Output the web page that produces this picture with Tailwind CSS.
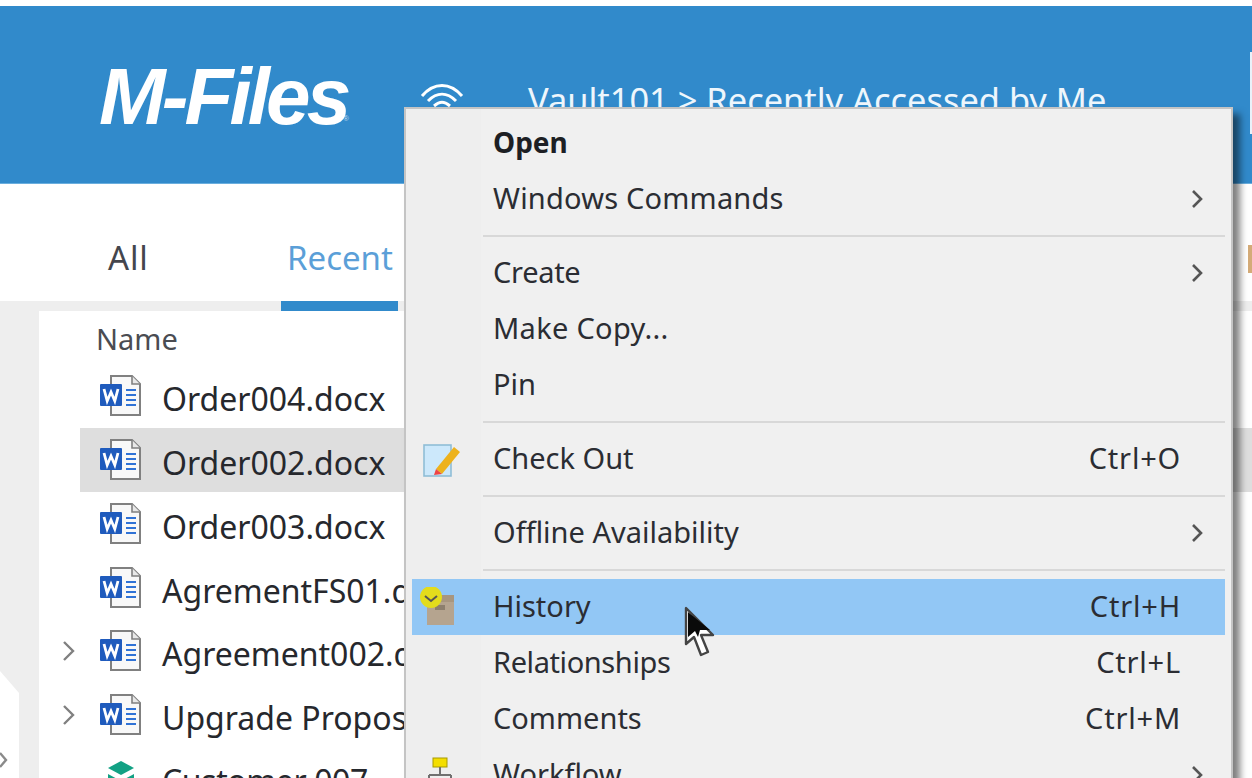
<!DOCTYPE html>
<html lang="en">
<head>
    <meta charset="UTF-8">
    <title>M-Files</title>
    <script src="https://cdn.jsdelivr.net/npm/@tailwindcss/browser@4"></script>
</head>
<body class="bg-white overflow-hidden font-['Noto_Sans','Open_Sans',sans-serif]">
<svg width="0" height="0" class="absolute">
    <defs>
        <symbol id="word" viewBox="0 0 42 42">
            <path d="M11 1h21l8 8v31H11z" fill="#f8f8f8" stroke="#808080" stroke-width="2"/>
            <path d="M32 1v8h8" fill="#e8e8e8" stroke="#808080" stroke-width="1.6"/>
            <path d="M26 15h10M26 20h10M26 25h10M26 30h10" stroke="#2f72d6" stroke-width="2"/>
            <rect x="0" y="9" width="22" height="22" rx="1" fill="#1f5bbd"/>
            <path d="M4 14l3.2 12 3.8-9 3.8 9L18 14" fill="none" stroke="#fff" stroke-width="2.8"/>
        </symbol>
    </defs>
</svg>

<div class="h-[778px] flex flex-col relative overflow-hidden">
    <!-- Header -->
    <div class="h-[6px] bg-white shrink-0"></div>
    <header class="h-[178px] bg-[#318acb] border-b border-[#6aaede] flex items-start pl-[99px] shrink-0 text-white">
        <div class="relative mt-[47px] w-[321px] text-[80px] leading-[88px] font-['Liberation_Sans'] font-bold italic tracking-[-3.900px]">
            M-Files
            <span class="absolute left-[244px] top-[61px] text-[8px] leading-[10px] font-normal not-italic tracking-normal text-white/70">®</span>
        </div>
        <svg class="mt-[76px] w-[44px] h-[30px]" viewBox="0 0 44 30" fill="none" stroke="#fff" stroke-width="3">
            <path d="M2 14C14 0 30 0 42 14"/><path d="M8 19c9-9 19-9 28 0"/><path d="M14 24c6-5 10-5 16 0"/><path d="M20 29c1.500-1 2.500-1 4 0"/>
        </svg>
        <div class="mt-[74px] ml-[64px] text-[34.400px] leading-[40px] whitespace-nowrap text-[#eef6fc]">Vault101 &gt; Recently Accessed by Me</div>
    </header>

    <!-- Tabs -->
    <div class="h-[117px] flex shrink-0 relative z-10">
        <div class="ml-[108px] mt-[52px] text-[33px] leading-[44px] tracking-[0.8px] text-[#44464d]">All</div>
        <div class="absolute left-[281px] top-0 w-[117px] h-[127px] border-b-[10px] border-[#318acb] pt-[52px] pl-[6px] text-[33px] leading-[44px] text-[#5b9fd8]">Recent</div>
    </div>

    <!-- List -->
    <div class="flex-1 bg-[#eeeeee] flex relative">
        <div class="w-[39px] relative shrink-0">
            <div class="absolute left-0 top-[370px] w-[19px] h-[110px] bg-white [clip-path:polygon(0_0,100%_22px,100%_100%,0_100%)]"></div>
            <svg class="absolute left-0 top-[451px] w-[8px] h-[16px]" viewBox="0 0 8 16" fill="none" stroke="#8a8a8a" stroke-width="2.4"><path d="M0 1l6 7-6 7"/></svg>
        </div>
        <div class="flex-1 bg-white mt-[10px] text-[#26282d] text-[32px] whitespace-nowrap overflow-hidden">
            <div class="h-[53px] pl-[57px] pt-[10px] text-[29px] leading-[36px] text-[#4a4c52]">Name</div>
            <div class="h-[64px] flex items-center pl-[61px] gap-[20px]"><svg class="w-[42px] h-[42px] shrink-0"><use href="#word"/></svg><span class="pt-[6px]">Order004.docx</span></div>
            <div class="h-[64px] ml-[41px] pl-[20px] flex items-center gap-[20px] bg-[#dedede]"><svg class="w-[42px] h-[42px] shrink-0"><use href="#word"/></svg><span class="pt-[6px]">Order002.docx</span></div>
            <div class="h-[64px] flex items-center pl-[61px] gap-[20px]"><svg class="w-[42px] h-[42px] shrink-0"><use href="#word"/></svg><span class="pt-[6px]">Order003.docx</span></div>
            <div class="h-[63px] flex items-center pl-[61px] gap-[20px]"><svg class="w-[42px] h-[42px] shrink-0"><use href="#word"/></svg><span class="pt-[7px]">AgrementFS01.docx</span></div>
            <div class="h-[64px] flex items-center pl-[22px] gap-[20px]">
                <svg class="w-[16px] h-[22px] shrink-0 mr-[3px]" viewBox="0 0 16 22" fill="none" stroke="#808080" stroke-width="2.4"><path d="M3 2l9 9-9 9"/></svg>
                <svg class="w-[42px] h-[42px] shrink-0"><use href="#word"/></svg><span class="pt-[6px]">Agreement002.docx</span>
            </div>
            <div class="h-[63px] flex items-center pl-[22px] gap-[20px]">
                <svg class="w-[16px] h-[22px] shrink-0 mr-[3px]" viewBox="0 0 16 22" fill="none" stroke="#808080" stroke-width="2.4"><path d="M3 2l9 9-9 9"/></svg>
                <svg class="w-[42px] h-[42px] shrink-0"><use href="#word"/></svg><span class="pt-[7px]">Upgrade Proposal.docx</span>
            </div>
            <div class="h-[64px] flex items-center pl-[68px] gap-[27px]">
                <svg class="w-[28px] h-[36px] shrink-0" viewBox="0 0 28 36"><path d="M14 1l13 7-13 7L1 8z" fill="#12a184"/><path d="M1 14l13 7 13-7v6l-13 7-13-7z" fill="#12a184"/></svg>
                <span class="pt-[6px] tracking-[-0.4px]">Customer 007</span>
            </div>
        </div>
    </div>

    <!-- Context menu -->
    <div class="absolute z-20 left-[404px] top-[107px] w-[829px] h-[680px] bg-[#f0f0f0] border-2 border-[#c4c4c4] shadow-[7px_7px_7px_rgba(0,0,0,0.5)] text-[29px] text-[#2b2d33] px-[6px] pt-[6px] whitespace-nowrap">
        <div class="absolute left-0 top-0 w-[75px] h-full bg-[#eeeeee]"></div>
        <div class="relative">
            <div class="h-[56px] flex items-center pl-[81px] pb-[2px]"><b class="font-bold text-[28px] text-[#1d1f24]">Open</b></div>
            <div class="h-[56px] flex items-center justify-between pl-[81px] pr-[20px]">
                <span class="pb-[2px] tracking-[0.2px]">Windows Commands</span>
                <svg class="w-[14px] h-[20px]" viewBox="0 0 14 20" fill="none" stroke="#555" stroke-width="2.6"><path d="M2 2l8 8-8 8"/></svg>
            </div>
            <div class="h-[18px] flex items-center ml-[71px]"><div class="w-full h-[2px] bg-[#d8d8d8]"></div></div>
            <div class="h-[56px] flex items-center justify-between pl-[81px] pr-[20px]">
                <span class="pb-[2px] tracking-[-0.3px]">Create</span>
                <svg class="w-[14px] h-[20px]" viewBox="0 0 14 20" fill="none" stroke="#555" stroke-width="2.6"><path d="M2 2l8 8-8 8"/></svg>
            </div>
            <div class="h-[56px] flex items-center pl-[81px] pb-[2px] tracking-[0.3px]">Make Copy...</div>
            <div class="h-[56px] flex items-center pl-[81px] pb-[2px]">Pin</div>
            <div class="h-[18px] flex items-center ml-[71px]"><div class="w-full h-[2px] bg-[#d8d8d8]"></div></div>
            <div class="h-[56px] flex items-center justify-between pl-[11px] pr-[44px]">
                <div class="flex items-center">
                    <svg class="w-[38px] h-[36px] mr-[32px]" viewBox="0 0 38 36">
                        <rect x="1" y="4" width="27" height="31" fill="#cce8fb" stroke="#8fbdd6" stroke-width="1.6"/>
                        <path d="M13 28L31 6l6 5-18 22z" fill="#edb21c"/>
                        <path d="M13 28l-2 6 8-1z" fill="#ef4444"/>
                    </svg>
                    <span class="pb-[2px]">Check Out</span>
                </div>
                <span class="pb-[2px] tracking-[0.8px]">Ctrl+O</span>
            </div>
            <div class="h-[18px] flex items-center ml-[71px]"><div class="w-full h-[2px] bg-[#d8d8d8]"></div></div>
            <div class="h-[56px] flex items-center justify-between pl-[81px] pr-[20px]">
                <span class="pb-[2px]">Offline Availability</span>
                <svg class="w-[14px] h-[20px]" viewBox="0 0 14 20" fill="none" stroke="#555" stroke-width="2.6"><path d="M2 2l8 8-8 8"/></svg>
            </div>
            <div class="h-[18px] flex items-center ml-[71px]"><div class="w-full h-[2px] bg-[#d8d8d8]"></div></div>
            <div class="h-[56px] flex items-center justify-between pl-[7px] pr-[44px] bg-[#92c7f5]">
                <div class="flex items-center">
                    <svg class="w-[38px] h-[40px] mr-[36px]" viewBox="0 0 38 40">
                        <rect x="8" y="8" width="27" height="30" fill="#b5a48f"/>
                        <rect x="20" y="8" width="15" height="7" fill="#a8967f"/>
                        <rect x="16" y="18" width="10" height="5" fill="#8d7f6d"/>
                        <circle cx="12" cy="10" r="11" fill="#e3dc1c"/>
                        <path d="M6 9l6 5 6-5" fill="none" stroke="#555" stroke-width="2"/>
                    </svg>
                    <span class="pb-[2px]">History</span>
                </div>
                <span class="pb-[2px] tracking-[0.8px]">Ctrl+H</span>
            </div>
            <div class="h-[56px] flex items-center justify-between pl-[81px] pr-[44px]"><span class="pb-[2px] tracking-[-0.4px]">Relationships</span><span class="pb-[2px] tracking-[0.8px]">Ctrl+L</span></div>
            <div class="h-[56px] flex items-center justify-between pl-[81px] pr-[44px]"><span class="pb-[2px]">Comments</span><span class="pb-[2px] tracking-[0.8px]">Ctrl+M</span></div>
            <div class="h-[56px] flex items-center justify-between pl-[14px] pr-[20px]">
                <div class="flex items-center">
                    <svg class="w-[28px] h-[36px] mr-[39px]" viewBox="0 0 28 36" fill="none">
                        <rect x="7" y="1" width="14" height="9" fill="#f4de00" stroke="#a89a00"/>
                        <path d="M14 10v8M3 18h22M3 18v6M25 18v6" stroke="#707070" stroke-width="2"/>
                        <rect x="0" y="24" width="8" height="8" stroke="#707070" stroke-width="2"/>
                        <rect x="20" y="24" width="8" height="8" stroke="#707070" stroke-width="2"/>
                    </svg>
                    <span class="pb-[2px]">Workflow</span>
                </div>
                <svg class="w-[14px] h-[20px]" viewBox="0 0 14 20" fill="none" stroke="#555" stroke-width="2.6"><path d="M2 2l8 8-8 8"/></svg>
            </div>
        </div>
    </div>

    <!-- Mouse cursor -->
    <svg class="absolute z-30 left-[683px] top-[605px] w-[34px] h-[54px]" viewBox="0 0 34 54">
        <path d="M3 3v36l8-7 7 18 7-3-7-17h12z" fill="#fff" stroke="#444" stroke-width="2.4" stroke-linejoin="round"/>
        <path d="M5 7v25l7-6 3 6 2-7h10z" fill="#0a0a0a"/>
    </svg>

    <!-- Right edge fragments -->
    <div class="absolute z-10 left-[1250px] top-[52px] w-[2px] h-[82px] bg-[#e8f2fa]"></div>
    <div class="absolute z-10 left-[1248px] top-[245px] w-[4px] h-[28px] bg-[#d4ab78]"></div>
</div>
</body>
</html>
